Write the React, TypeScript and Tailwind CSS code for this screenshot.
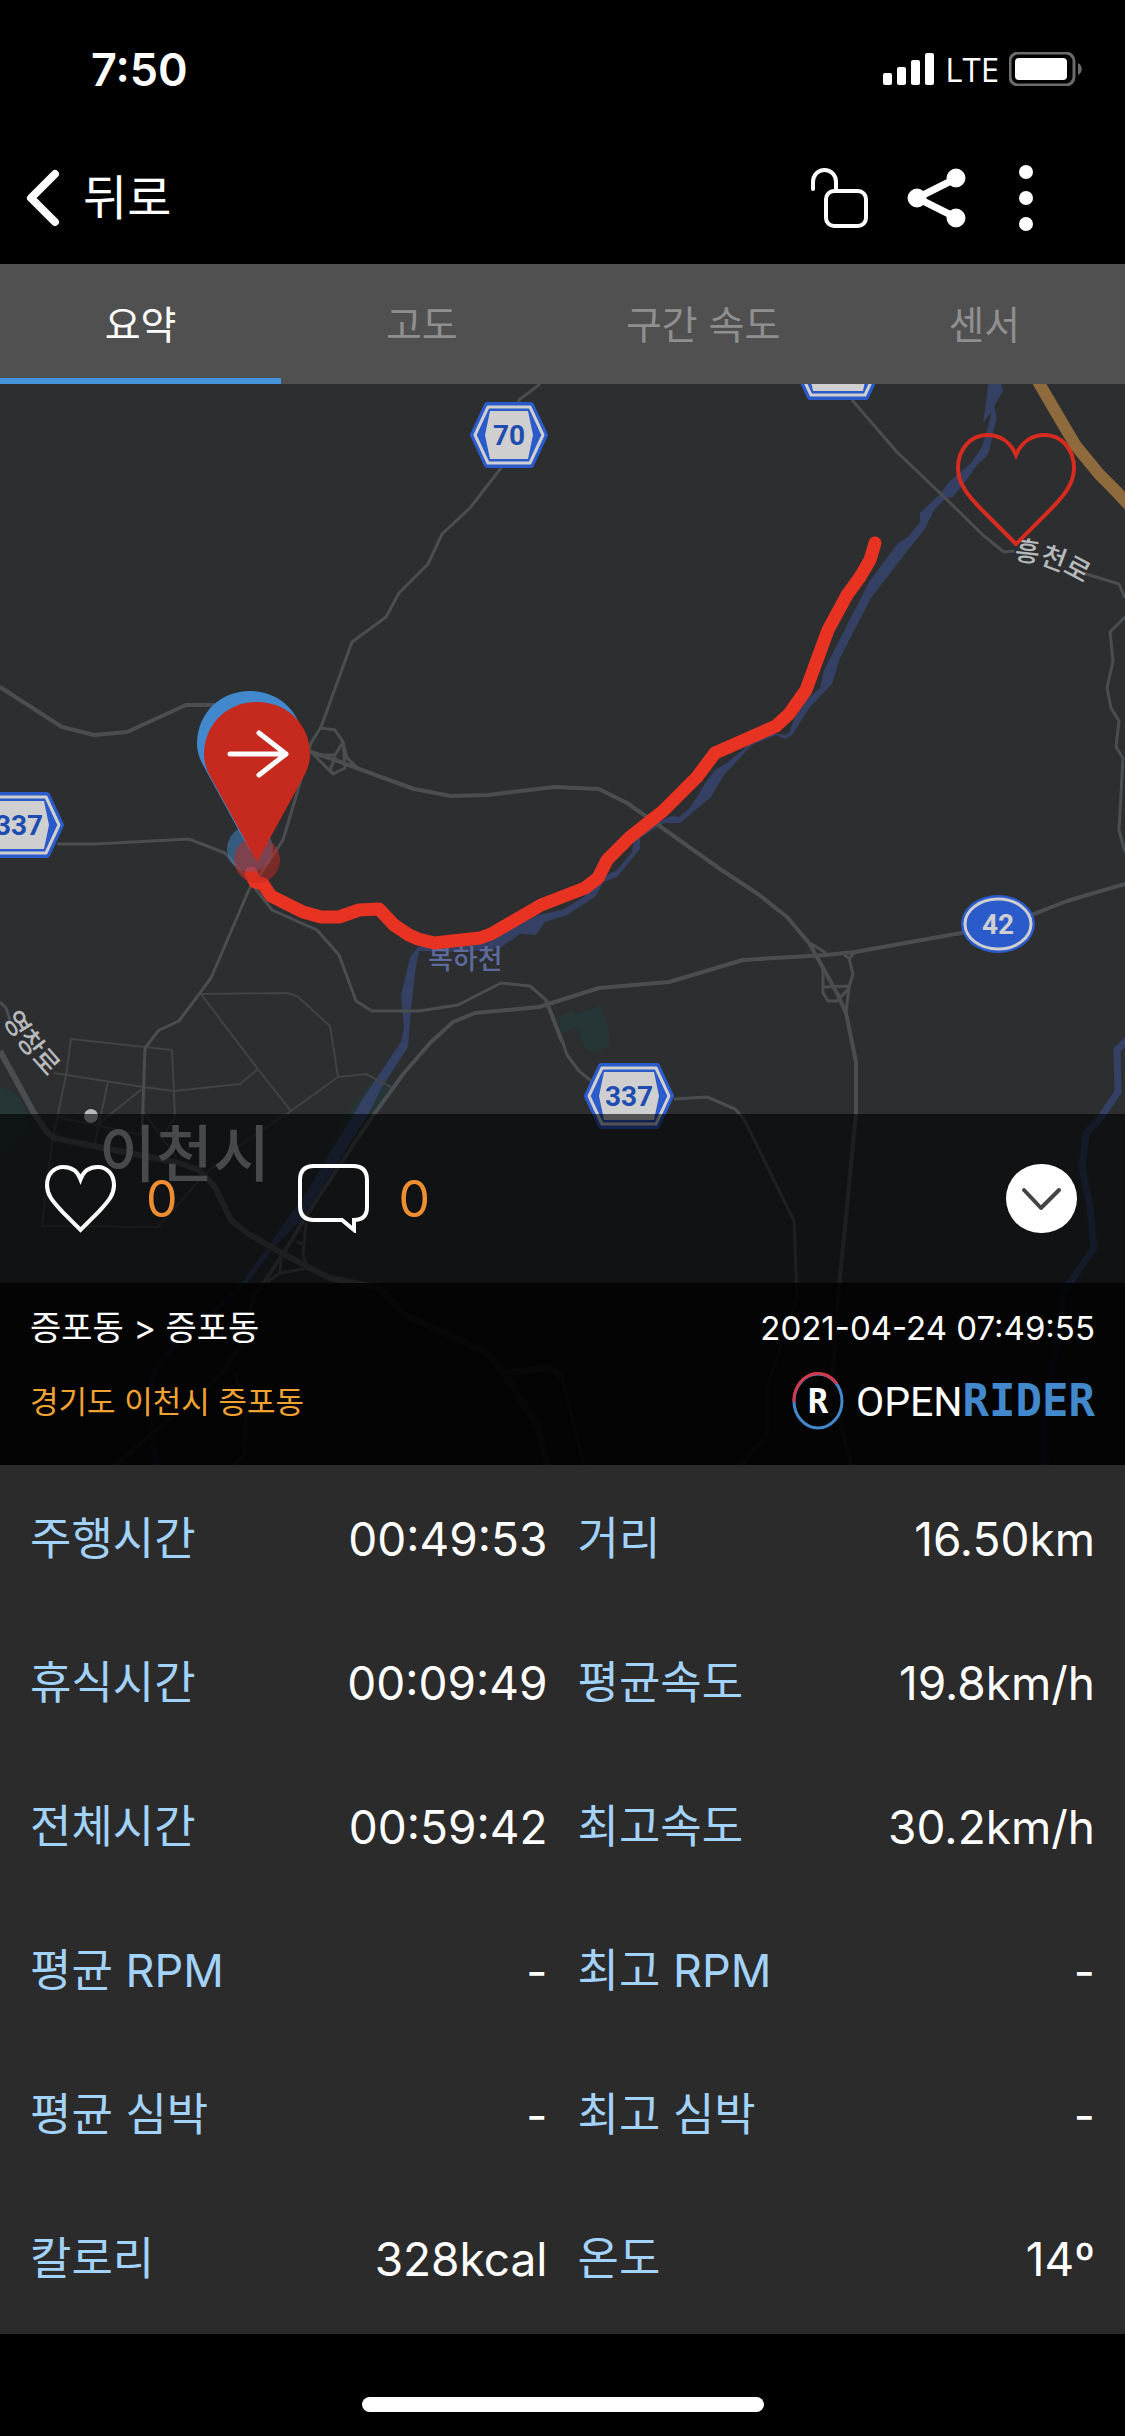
import React from 'react';

interface Stat {
  label: string;
  value: string;
}

const tabs = ['요약', '고도', '구간 속도', '센서'];

const stats: Stat[] = [
  { label: '주행시간', value: '00:49:53' },
  { label: '거리', value: '16.50km' },
  { label: '휴식시간', value: '00:09:49' },
  { label: '평균속도', value: '19.8km/h' },
  { label: '전체시간', value: '00:59:42' },
  { label: '최고속도', value: '30.2km/h' },
  { label: '평균 RPM', value: '-' },
  { label: '최고 RPM', value: '-' },
  { label: '평균 심박', value: '-' },
  { label: '최고 심박', value: '-' },
  { label: '칼로리', value: '328kcal' },
  { label: '온도', value: '14º' },
];

// Local roads and ramps
const roads = [
  'M540 384 519 400 509 435 501 468 470 508 442 534 428 564 399 593 386 617 352 642 321 727 311 743 298 790 283 840 260 875 251 885 211 978 179 1021 159 1030 145 1048 142 1135',
  'M57 844H95L189 839 225 853 251 883 272 910 317 930 339 955 356 1001 372 1011H419L458 1005 501 983 530 986 546 1000 562 1040 567 1055 579 1071 595 1084M674 1099 707 1097 735 1109 744 1119 794 1221 797 1298 767 1387V1433L742 1465',
  'M852 400 897 452 940 493 984 536 1004 552 1014 551M1083 573 1119 584 1125 598M1125 617 1110 632 1113 661 1107 688 1111 708 1119 721 1116 747 1123 758 1119 830 1125 852',
  'M321 728 335 730 343 742 345 768 333 774 311 752M343 742 335 755H317M343 742 347 758 360 770M336 757 330 769 333 774',
  'M810 943 826 953M844 955 849 958 853 974 849 987 846 1013M823 967V993L828 1001H837L849 988M824 987 849 986M855 952 849 959',
  'M306 1223 303 1255 308 1268 280 1273 267 1282M297 1242 303 1244M281 1257 280 1273M235 1373 246 1413 245 1453 235 1465M562 1377 584 1465M0 1002 6 1008 10 1020',
];

const wideRoads = [
  'M0 687 62 727 94 735 127 732 186 705H240L311 752 335 760 381 777 414 789 451 796 488 795 554 787 599 789 627 803 647 817 720 869 758 894 787 917 809 943 822 966 838 995 846 1013 856 1062V1113L846 1217 838 1297 833 1370 840 1420 851 1465',
  'M1125 884 1067 901 1034 914 961 933 855 952 826 955 743 960 669 982 599 988 539 1007 475 1013 453 1022 431 1042 404 1073 375 1113 353 1145 312 1207 281 1257 252 1300 247 1323 240 1347 222 1373 116 1465M546 1000 562 1042',
];

const streets = [
  'M201 994 287 993 297 996 330 1026 338 1077 291 1111 240 1145 202 1177 158 1227 42 1226 52 1143 66 1075 71 1039 172 1050 175 1117 163 1137',
  'M201 994 257 1068 291 1111M54 1073 143 1087 174 1091 240 1084 257 1070M108 1082 94 1147M142 1089 97 1125M142 1110 176 1157M338 1077 366 1074 391 1087M57 1117 142 1135',
];

// Provincial road sign: a hexagon with a light number plate in it
const HexSign = ({ x, y, half, label }: { x: number; y: number; half: number; label: string }) => {
  const hex = (w: number, h: number, cut: number) =>
    `${-w},0 ${-w + cut},${-h} ${w - cut},${-h} ${w},0 ${w - cut},${h} ${-w + cut},${h}`;
  return (
    <g transform={`translate(${x} ${y})`} strokeLinejoin="round">
      <polygon points={hex(half - 3, 30, 14)} fill="#2b5bcb" stroke="#2b5bcb" strokeWidth="6" />
      <polygon points={hex(half - 5, 28, 13)} fill="none" stroke="#cfcfcf" strokeWidth="3" />
      <polygon points={hex(half - 15, 24, 5)} fill="#cfcfcf" />
      <text
        y="10"
        textAnchor="middle"
        fill="#1f4cb0"
        className="font-[Roboto,sans-serif] text-[28px] font-bold"
      >
        {label}
      </text>
    </g>
  );
};

const Pin = ({ x, y, color }: { x: number; y: number; color: string }) => (
  <g transform={`translate(${x} ${y})`} fill={color}>
    <circle r="23" fillOpacity="0.5" />
    <path d="M0 2 -47 -84C-53 -95 -53 -103 -53 -107 -52 -137 -29 -158 0 -158 29 -158 52 -137 53 -107 53 -103 53 -95 47 -84Z" />
  </g>
);

const RideMap = () => (
  <svg viewBox="0 384 1125 1081" className="block h-auto w-full bg-[#2c2e30]" role="img" aria-label="주행 경로">
    <g fill="#263535">
      <path d="M575 1015 601 1005 609 1030V1046L596 1053 585 1049 577 1027 562 1034 556 1018 573 1010Z" />
      <path d="M0 1086 18 1095 27 1113V1130L0 1157ZM372 1080 348 1113 310 1180 330 1170 395 1085Z" />
    </g>
    {/* River */}
    <path
      fill="#354164"
      d="M988 384H1001L1003 391 994 406 997 418 993 432 989 452 985 458 977 465 968 478 953 497 946 498 934 510 925 529 908 550 871 598 840 658 832 684 810 707 792 735 785 739 776 735 752 745 724 775 711 797 680 823 664 823 640 838V849L617 877 603 882 596 896 567 915 545 922 536 935 520 934 500 948 466 952 419 951 415 973 411 1010 408 1047 382 1087 368 1115 301 1220 276 1245 247 1283 229 1302 183 1340 158 1370 149 1400 160 1465H154L144 1400 152 1370 178 1336 222 1302 244 1280 269 1245 310 1187 342 1133 364 1097 401 1042 404 1027 401 995 410 957 418 947 444 940 487 940 538 915 562 910 584 897 596 883 612 872 616 871 632 852 634 840 657 823 671 816 679 817 690 808 706 782 715 770 727 763 752 742 774 733 785 735 789 733 795 717 806 700 820 688 824 670 869 582 898 543 908 537 920 522V513L939 495 950 481 971 463 982 447 990 420 991 412 983 423 986 403Z"
    />
    <path
      fill="none"
      stroke="#354164"
      strokeWidth="7"
      d="M1127 1040 1117 1050 1118 1092 1099 1120 1086 1133 1082 1167 1090 1207 1094 1248 1063 1293 1062 1320 1054 1360 1043 1413 1046 1465"
    />
    <g fill="none" strokeLinejoin="round">
      <g stroke="#414345" strokeWidth="2">
        {streets.map((d) => <path key={d} d={d} />)}
      </g>
      <g stroke="#4b4e50" strokeWidth="3">
        {roads.map((d) => <path key={d} d={d} />)}
      </g>
      <g stroke="#4b4e50" strokeWidth="4">
        {wideRoads.map((d) => <path key={d} d={d} />)}
      </g>
      <path
        stroke="#4b4e50"
        strokeWidth="6"
        d="M0 1051 34 1113 47 1132 54 1138 179 1163 199 1170 215 1187 231 1220 247 1233 280 1252 310 1268 330 1278 380 1288 405 1315 486 1352 504 1373 550 1368 562 1377M504 1373 538 1427 547 1465"
      />
      <path stroke="#8f6a3c" strokeWidth="12" d="M1036 378 1067 431 1076 446 1099 474 1113 488 1131 507" />
    </g>

    <g fill="#b7babc" className="font-['Noto_Sans_CJK_KR',sans-serif] text-[27px] font-medium">
      <path id="hongcheon" d="M1014 561Q1046 558 1100 594" fill="none" />
      <path id="yeongchang" d="M3 1018Q16 1046 66 1096" fill="none" />
      <text><textPath href="#hongcheon">흥천로</textPath></text>
      <text><textPath href="#yeongchang">영창로</textPath></text>
      <text x="428" y="969" fill="#5f6a9c">복하천</text>
      <circle cx="91" cy="1116" r="7" />
      <text x="99" y="1177" fill="#b4b6b8" className="text-[62px]">이천시</text>
    </g>

    <HexSign x={509} y={435} half={39} label="70" />
    <HexSign x={838} y={367} half={45} label="70" />
    <HexSign x={19} y={825} half={45} label="337" />
    <HexSign x={629} y={1096} half={45} label="337" />
    <ellipse cx="998" cy="924" rx="37" ry="29" fill="#2b5bcb" />
    <ellipse cx="998" cy="924" rx="33" ry="25" fill="none" stroke="#cfcfcf" strokeWidth="3" />
    <text x="998" y="934" textAnchor="middle" fill="#cfcfcf" className="font-[Roboto,sans-serif] text-[28px] font-bold">42</text>

    {/* Recorded ride */}
    <path
      fill="none"
      stroke="#e83323"
      strokeWidth="13"
      strokeLinecap="round"
      strokeLinejoin="round"
      d="M251 873 255 882 263 884 271 896 303 912 321 917H339L359 910 379 909 394 925 409 935 418 939 434 943 480 938 491 934 541 905 585 888 598 878 607 860 630 837 663 811 697 777 715 753 776 726 789 714 806 690 828 630 847 595 860 577 870 560 875 543"
    />
    <Pin x={250} y={849} color="#4288cc" />
    <Pin x={257} y={860} color="#c6291d" />
    <path
      fill="none"
      stroke="#fff"
      strokeWidth="5"
      strokeLinecap="round"
      strokeLinejoin="round"
      d="M230 754H286M259 733 286 754 259 775"
    />
    <path
      fill="none"
      stroke="#d62b1f"
      strokeWidth="4"
      d="M1016 544 985 513C968 496 958 484 958 468 958 449 971 435 987 435 1001 435 1011 443 1016 455 1021 443 1031 435 1045 435 1061 435 1074 449 1074 468 1074 484 1064 496 1047 513Z"
    />
  </svg>
);

const StatusBar = () => (
  <div className="flex h-[132px] items-center justify-between pt-1.5 pr-[42px] pl-[91px]">
    <span className="text-[45px] leading-none font-semibold">7:50</span>
    <div className="flex items-center gap-2.5">
      <svg width="52" height="34" viewBox="0 0 52 34" fill="#fff">
        <rect y="21" width="9" height="12" rx="2" />
        <rect x="14" y="15" width="9" height="18" rx="2" />
        <rect x="28" y="8" width="9" height="25" rx="2" />
        <rect x="42" y="1" width="9" height="32" rx="2" />
      </svg>
      <span className="font-['Open_Sans',sans-serif] text-[33px] leading-none font-medium">LTE</span>
      <svg width="74" height="34" viewBox="0 0 74 34">
        <rect x="1" y="1" width="64" height="32" rx="8" fill="none" stroke="#6b6b6b" strokeWidth="3" />
        <rect x="6" y="6" width="52" height="22" rx="4" fill="#fff" />
        <path d="M69 11C74 13 74 21 69 23Z" fill="#6b6b6b" />
      </svg>
    </div>
  </div>
);

const NavBar = () => (
  <header className="flex h-[132px] items-center justify-between pr-[79px] pl-[26px]">
    <button type="button" className="flex items-center gap-[23px]">
      <svg width="34" height="58" viewBox="0 0 34 58" fill="none" stroke="#fff" strokeWidth="8" strokeLinecap="round" strokeLinejoin="round">
        <path d="M29 5 5 29 29 53" />
      </svg>
      <span className="text-[48px] leading-none">뒤로</span>
    </button>
    <div className="flex items-center gap-[39px]">
      <button type="button" aria-label="공개 설정">
        <svg width="57" height="60" viewBox="0 0 57 60" fill="none" stroke="#fff" strokeWidth="4" strokeLinecap="round">
          <path d="M2 21V14C2 7 7 2 13.500 2S25 7 25 14V22" />
          <rect x="15" y="23" width="40" height="35" rx="8" />
        </svg>
      </button>
      <button type="button" aria-label="공유">
        <svg width="60" height="60" viewBox="0 0 60 60" fill="#fff" stroke="#fff">
          <path d="M50 10 10 30 50 50" fill="none" strokeWidth="7" />
          <circle cx="10" cy="30" r="9" />
          <circle cx="49" cy="10" r="9" />
          <circle cx="49" cy="50" r="9" />
        </svg>
      </button>
      <button type="button" aria-label="더보기" className="px-3">
        <svg width="16" height="66" viewBox="0 0 16 66" fill="#fff">
          <circle cx="8" cy="7" r="7" />
          <circle cx="8" cy="33" r="7" />
          <circle cx="8" cy="59" r="7" />
        </svg>
      </button>
    </div>
  </header>
);

const Logo = () => (
  <div className="flex items-center gap-3">
    <div className="relative flex h-[58px] w-[52px] items-center justify-center">
      <svg viewBox="0 0 52 58" className="absolute inset-0" fill="none" strokeWidth="3">
        <ellipse cx="26" cy="29" rx="24" ry="27" stroke="#4288cc" />
        <path d="M2 30A24 27 0 0 1 45 12" stroke="#d0384c" />
      </svg>
      <span className="font-['DejaVu_Sans_Mono',monospace] text-[34px] leading-none font-bold">R</span>
    </div>
    <span className="flex items-baseline leading-none">
      <span className="font-[Roboto,sans-serif] text-[41px]">OPEN</span>
      <span className="font-['DejaVu_Sans_Mono',monospace] text-[44px] font-bold text-[#4288cc]">RIDER</span>
    </span>
  </div>
);

export default function App() {
  return (
    <div className="min-h-screen w-full bg-black font-[Inter,'Noto_Sans_CJK_KR',sans-serif] text-white">
      <StatusBar />
      <NavBar />

      <nav className="grid grid-cols-4 bg-[#505050]" role="tablist">
        {tabs.map((tab, index) => (
          <button
            key={tab}
            type="button"
            role="tab"
            aria-selected={index === 0}
            className={`h-[120px] border-y-6 border-t-transparent text-[39px] leading-none ${
              index === 0 ? 'border-b-[#4593dc] text-white' : 'border-b-transparent text-[#8f8f8f]'
            }`}
          >
            {tab}
          </button>
        ))}
      </nav>

      <section className="relative">
        <RideMap />
        <div className="absolute inset-x-0 bottom-0">
          <div className="flex items-center justify-between bg-black/60 py-[50px] pr-12 pl-[45px]">
            <div className="flex items-center gap-[120px]">
              <button type="button" aria-label="좋아요" className="flex items-center gap-[30px]">
                <svg width="71" height="68" viewBox="0 0 70 67" fill="none" stroke="#fff" strokeWidth="4">
                  <path d="M35 64 17 46C8 36 2 30 2 20 2 9 9 2 18 2 26 2 32 6 35 14 38 6 44 2 52 2 61 2 68 9 68 20 68 30 62 36 53 46Z" />
                </svg>
                <span className="text-[50px] leading-none text-[#ee8e33]">0</span>
              </button>
              <button type="button" aria-label="댓글" className="flex items-center gap-[30px]">
                <svg width="71" height="69" viewBox="0 0 71 69" fill="none" stroke="#fff" strokeWidth="4">
                  <path d="M16 2H55Q69 2 69 16V43Q69 56 56 56V66L44 56H16Q2 56 2 42V16Q2 2 16 2Z" />
                </svg>
                <span className="text-[50px] leading-none text-[#ee8e33]">0</span>
              </button>
            </div>
            <button type="button" aria-label="접기" className="rounded-full bg-white">
              <svg width="71" height="69" viewBox="0 0 71 69" fill="none" stroke="#444" strokeWidth="4" strokeLinecap="round" strokeLinejoin="round">
                <path d="M18 26 35 44 53 26" />
              </svg>
            </button>
          </div>
          <div className="flex flex-col gap-4 bg-black/90 px-[30px] pt-[23px] pb-[29px]">
            <div className="flex h-11 items-center justify-between leading-none">
              <span className="text-[34px]">증포동 &gt; 증포동</span>
              <time className="text-[33px]">2021-04-24 07:49:55</time>
            </div>
            <div className="flex h-[70px] items-center justify-between">
              <span className="text-[31px] leading-none text-[#f0a232]">경기도 이천시 증포동</span>
              <Logo />
            </div>
          </div>
        </div>
      </section>

      <dl className="grid grid-cols-2 bg-[#2b2b2b] pt-0.5 pb-[3px]">
        {stats.map((stat) => (
          <div
            key={stat.label}
            className="flex items-center justify-between py-10 leading-16 odd:pr-[15px] odd:pl-[30px] even:pr-[30px] even:pl-[15px]"
          >
            <dt className="text-[45px] text-[#a3d3fb]">{stat.label}</dt>
            <dd className="text-[46px]">{stat.value}</dd>
          </div>
        ))}
      </dl>

      <footer className="flex justify-center pt-[63px] pb-6">
        <div className="h-[15px] w-[402px] rounded-full bg-white" />
      </footer>
    </div>
  );
}
